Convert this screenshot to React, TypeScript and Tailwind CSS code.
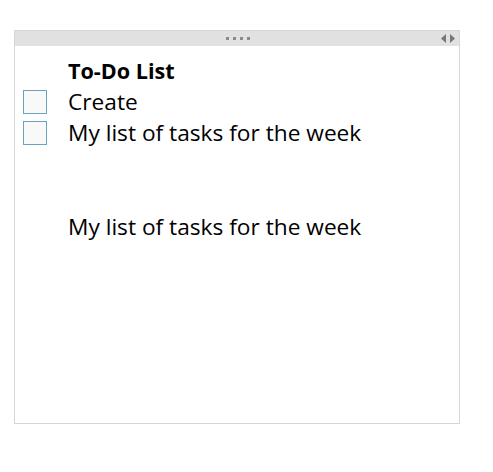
import React from "react";

function Box() {
  return <div className="w-[24px] h-[24px] border border-[#6aa3bd] bg-[#f9f9f9]" />;
}

export default function App() {
  return (
    <div className="w-[493px] h-[472px] bg-white pt-[30px] pl-[14px]" style={{ fontFamily: '"Open Sans", "Noto Sans", sans-serif' }}>
      <div className="w-[446px] h-[394px] border border-[#d6d6d6] flex flex-col">
        <div className="h-[15px] bg-[#e1e1e1] relative flex items-center justify-center">
          <div className="flex gap-[4px] ml-[1px]">
            <div className="w-[3px] h-[3px] bg-[#8a8a8a]" />
            <div className="w-[3px] h-[3px] bg-[#8a8a8a]" />
            <div className="w-[3px] h-[3px] bg-[#8a8a8a]" />
            <div className="w-[3px] h-[3px] bg-[#8a8a8a]" />
          </div>
          <div className="absolute right-[4px] top-0 h-full flex items-center gap-[4px]">
            <svg width="5" height="9" viewBox="0 0 5 9"><path d="M5 0 L0 4.5 L5 9 Z" fill="#777" /></svg>
            <svg width="5" height="9" viewBox="0 0 5 9"><path d="M0 0 L5 4.5 L0 9 Z" fill="#777" /></svg>
          </div>
        </div>
        <div className="pt-[9px] text-[22.7px] text-black leading-[31px]">
          <div className="flex items-center h-[31px]">
            <div className="w-[53px]" />
            <span className="font-bold text-[21.6px]">To-Do List</span>
          </div>
          <div className="flex items-center h-[31px]">
            <div className="w-[53px] pl-[8px]"><Box /></div>
            <span>Create</span>
          </div>
          <div className="flex items-center h-[31px]">
            <div className="w-[53px] pl-[8px]"><Box /></div>
            <span>My list of tasks for the week</span>
          </div>
          <div className="flex items-center h-[31px] mt-[63px]">
            <div className="w-[53px]" />
            <span>My list of tasks for the week</span>
          </div>
        </div>
      </div>
    </div>
  );
}
